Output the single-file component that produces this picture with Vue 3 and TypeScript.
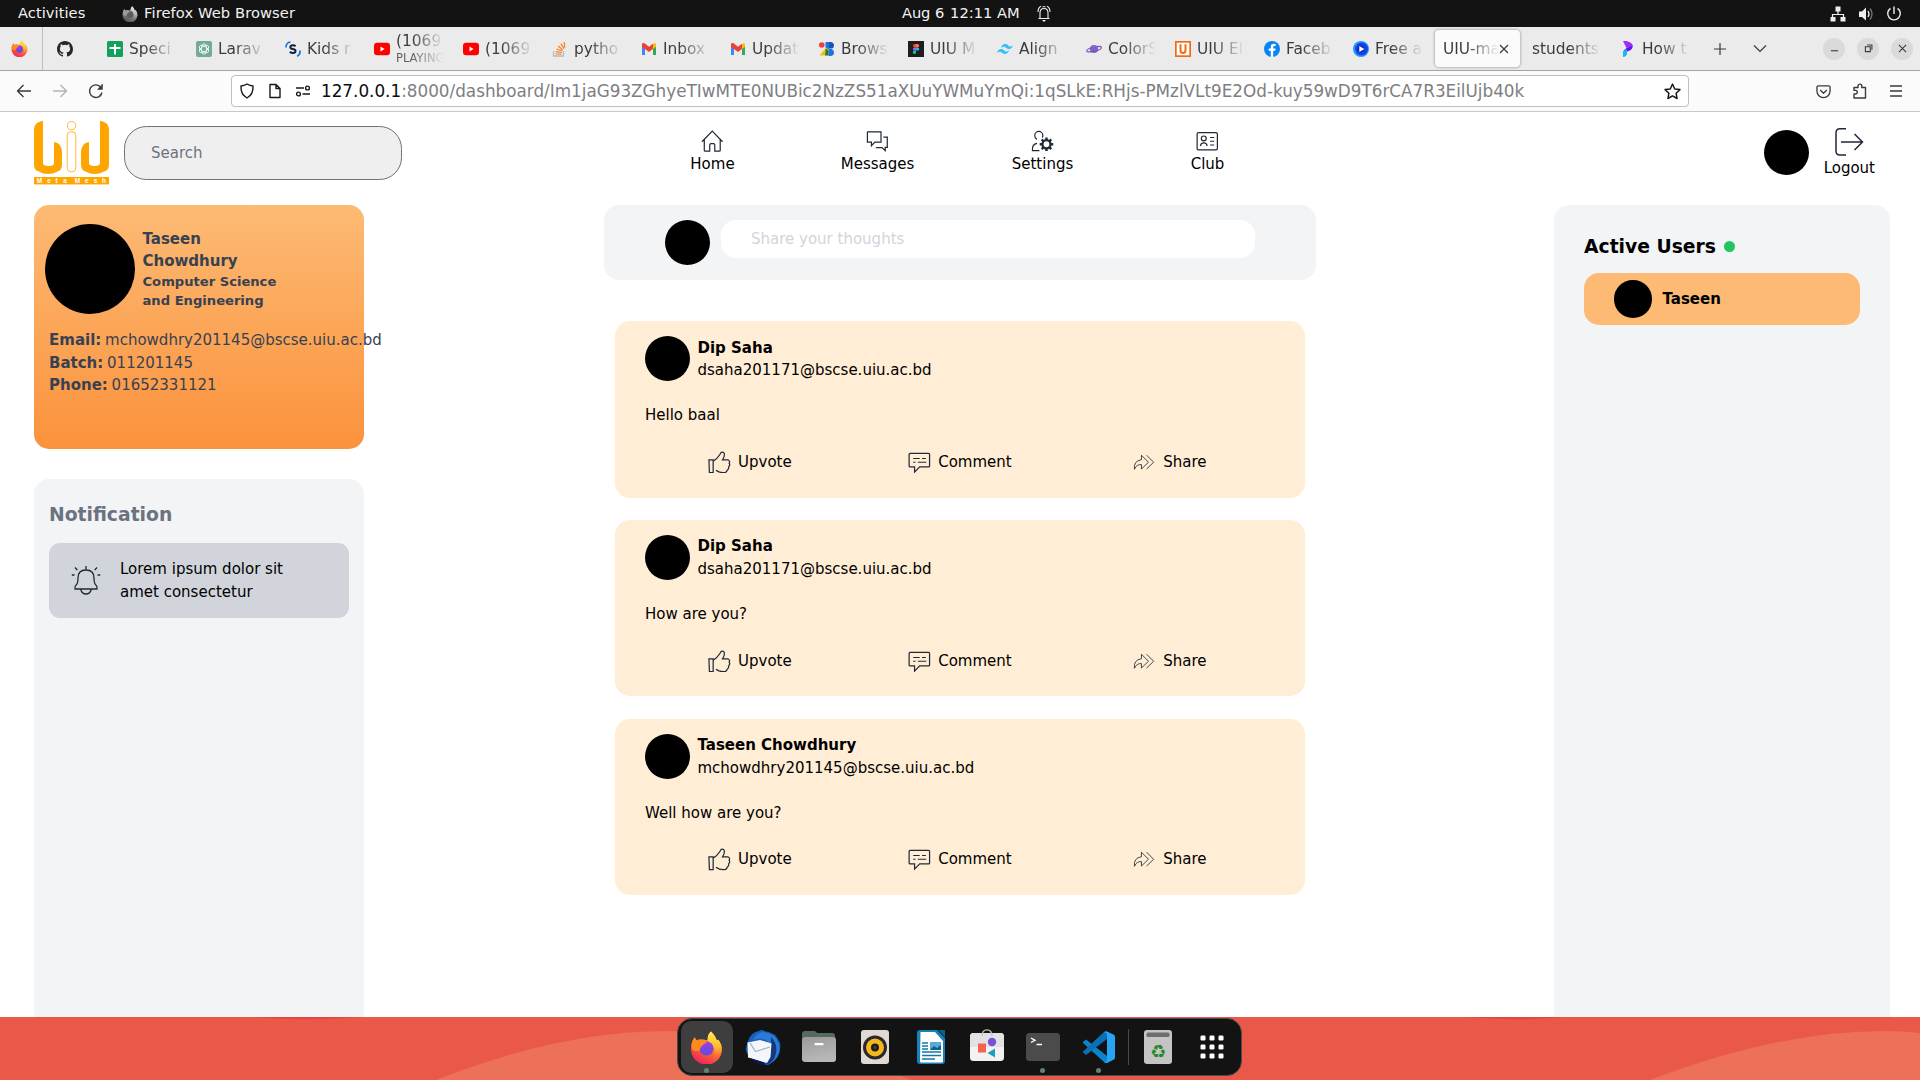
<script setup lang="ts">
interface Tab {
  title: string
  icon?: string
  note?: string
  active?: boolean
}

const tabIcons: Record<string, string> = {
  sheets:
    '<rect width="16" height="16" rx="1.500" fill="#12a05c"/><path d="M7 3h2v3h4.500v2H9v5.500H7V8H2.500V6H7z" fill="#fff"/>',
  openai:
    '<rect width="16" height="16" rx="2" fill="#74aa9c"/><g fill="none" stroke="#fff" stroke-width=".8"><ellipse cx="8" cy="8" rx="2.600" ry="5.200"/><ellipse cx="8" cy="8" rx="2.600" ry="5.200" transform="rotate(60 8 8)"/><ellipse cx="8" cy="8" rx="2.600" ry="5.200" transform="rotate(120 8 8)"/></g>',
  kids:
    '<path d="M1 6.500Q1 1.500 5.500 1" fill="none" stroke="#1b74e4" stroke-width="1.700"/><path d="M15 9.500Q15.500 14 12 15.200" fill="none" stroke="#1b74e4" stroke-width="1.700"/><path d="M10.600 5.300Q9.500 4.300 8 4.300C6.300 4.300 5.300 5.100 5.300 6.200C5.300 8.900 10.500 7.200 10.500 9.900C10.500 11.200 9.300 11.900 7.900 11.900Q6 11.900 4.900 10.700" fill="none" stroke="#14213d" stroke-width="2"/>',
  youtube:
    '<rect y="1.800" width="16" height="12.400" rx="3.200" fill="#f00"/><path d="M6.500 5.600v4.800L10.600 8z" fill="#fff"/>',
  stack:
    '<path d="M1.500 10v5h10v-5" fill="none" stroke="#bcbbbb" stroke-width="1.300"/><path d="M3.500 13h6M3.700 10.700l6 .8M4.500 8l5.600 2M6.200 5l4.600 4M9 2.600l3 5M12.200 1l.6 5.600" stroke="#f48024" stroke-width="1.200"/>',
  gmail:
    '<path d="M1 3v11h3V6z" fill="#4285f4"/><path d="M15 3v11h-3V6z" fill="#34a853"/><path d="M1 2.600Q3 1.200 4.500 3L8 5.800 11.500 3 12.500 3V7.500L8 11 1 5.800z" fill="#ea4335"/><path d="M12 3.200Q14 1.200 15 3v2.700L12 8z" fill="#fbbc04"/>',
  brows:
    '<circle cx="2.800" cy="4" r="2.800" fill="#ea4335"/><path d="M8.500 1H12Q15 1.500 15 4.500 15 7 12.500 7.500H8.500z" fill="#1558b0"/><path d="M9.500 8H13q2 1 2 3.500 0 3-3 3.500H9.500z" fill="#1a73e8"/><path d="M6.500 1H10V8H6.500z" fill="#1a73e8"/><path d="M.5 14.500L7 6.500l2 1.500-3 6.500z" fill="#fbbc04"/><path d="M7 7.500l2.500 2v5H6z" fill="#188038"/>',
  figma:
    '<rect width="16" height="16" fill="#1e1e1e"/><path d="M8 3H6.600a1.700 1.700 0 000 3.400H8z" fill="#f24e1e"/><path d="M8 3h1.400a1.700 1.700 0 010 3.400H8z" fill="#ff7262"/><path d="M8 6.400H6.600a1.700 1.700 0 000 3.400H8z" fill="#a259ff"/><circle cx="9.500" cy="8.100" r="1.700" fill="#1abcfe"/><path d="M8 9.800H6.600A1.600 1.600 0 108 11.400z" fill="#0acf83"/>',
  tailwind:
    '<path d="M4 7q1-4 4.200-4c3 0 3 2.500 4.800 2.500Q14.600 5.500 16 4q-1 4-4.200 4C9 8 8.700 5.800 6.800 5.800Q5.400 5.800 4 7zM0 12q1-4 4.200-4c3 0 3 2.500 4.800 2.500Q10.600 10.500 12 9q-1 4-4.200 4C5 13 4.700 10.800 2.800 10.800Q1.400 10.800 0 12z" fill="#38bdf8"/>',
  planet:
    '<circle cx="8" cy="8" r="4.100" fill="#8661c5"/><ellipse cx="8" cy="8.200" rx="7.600" ry="2" transform="rotate(-14 8 8)" fill="none" stroke="#6e56b8" stroke-width="1.200"/><path d="M4.500 6.500Q8 3 11.500 6z" fill="#8f6cd0"/>',
  uiu:
    '<rect width="16" height="16" fill="#f26a12"/><rect x="1.700" y="1.700" width="12.600" height="12.600" fill="#fff"/><path d="M5.500 3.300V9.300Q5.500 12 8 12T10.500 9.300V3.300" fill="none" stroke="#f26a12" stroke-width="2"/>',
  facebook:
    '<circle cx="8" cy="8" r="8" fill="#0a84f5"/><path d="M9.200 16V9.800h2l.4-2.300H9.200V6.200q0-1.300 1.300-1.300h1.200V3q-4.900-1-4.900 2.700v1.800H4.700v2.300h2.100V16z" fill="#fff"/>',
  play:
    '<circle cx="8" cy="8" r="8" fill="#149bff"/><circle cx="8.600" cy="8" r="6.400" fill="#1b3fe0"/><circle cx="7.600" cy="8" r="3.400" fill="#0f2bb8"/><path d="M6.300 5v6l5-3z" fill="#fff"/>',
  phosphor:
    '<path d="M3 0h3.500Q12.500 1.500 12.800 5L6.500 7z" fill="#a12bff"/><path d="M12.800 4.500Q12.500 9.500 7 10.500H3L6.500 7z" fill="#5a16f0"/><path d="M3 10.500L7 8v5Q6.500 15.500 3 16z" fill="#16b8f5"/>',
}

const tabs: Tab[] = [
  { title: 'Speci', icon: 'sheets' },
  { title: 'Larav', icon: 'openai' },
  { title: 'Kids r', icon: 'kids' },
  { title: '(1069', icon: 'youtube', note: 'PLAYING' },
  { title: '(1069', icon: 'youtube' },
  { title: 'pytho', icon: 'stack' },
  { title: 'Inbox', icon: 'gmail' },
  { title: 'Updat', icon: 'gmail' },
  { title: 'Brows', icon: 'brows' },
  { title: 'UIU M', icon: 'figma' },
  { title: 'Align', icon: 'tailwind' },
  { title: 'ColorS', icon: 'planet' },
  { title: 'UIU El', icon: 'uiu' },
  { title: 'Faceb', icon: 'facebook' },
  { title: 'Free a', icon: 'play' },
  { title: 'UIU-ma', active: true },
  { title: 'students' },
  { title: 'How t', icon: 'phosphor' },
]

const navItems = [
  {
    label: 'Home',
    icon: '<path d="M1 12.500L12 1.200 23 12.500M3.500 10.500V21.500q0 1 1 1h4.800V16q0-1.500 1.500-1.500h2.400q1.500 0 1.500 1.500v6.500h4.800q1 0 1-1V10.500"/>',
  },
  {
    label: 'Messages',
    icon: '<path d="M2 2h14V13H9.500l-3.700 3.700V13H1.500V2.500zM18.500 7.500h4.200V18.500h-2.200V22L17 18.700h-6.500"/>',
  },
  {
    label: 'Settings',
    icon: '<path d="M6.200 10Q4 8.500 4 5.800A4.300 4.300 0 0112.600 5.800Q12.600 7 12 8M9 22H1.500Q1 15 6.500 14.300"/><circle cx="16.500" cy="15.200" r="4.300" stroke-width="2.400"/><path d="M16.500 8v2.700M16.500 19.700v2.700M9.300 15.200H12M21 15.200h2.700M11.400 10.100l1.900 1.900M19.700 18.400l1.900 1.900M11.400 20.300l1.900-1.900M19.700 12l1.900-1.900" stroke-width="2.600"/>',
  },
  {
    label: 'Club',
    icon: '<rect x="1.200" y="2.700" width="21.600" height="18.600" rx="1.500"/><circle cx="8.300" cy="9" r="2.600"/><path d="M4.800 17Q5 13.800 8.300 13.800T11.800 17M15 8H19.500M15 12H19.500M15 16H19.500"/>',
  },
]

const posts = [
  { author: 'Dip Saha', email: 'dsaha201171@bscse.uiu.ac.bd', text: 'Hello baal' },
  { author: 'Dip Saha', email: 'dsaha201171@bscse.uiu.ac.bd', text: 'How are you?' },
  { author: 'Taseen Chowdhury', email: 'mchowdhry201145@bscse.uiu.ac.bd', text: 'Well how are you?' },
]

const firefoxArt =
  '<path d="M4.500 6Q5.500 8 6.500 9.200 9 7.500 13 8.300L17 9Q17 3 20.500 .5 21 4 24 7q1 1.500 2 2l1-.5Q31 12 31 18A15 14.500 0 011 18Q.5 11 4.500 6z" fill="url(#fxBody)"/><path d="M20.500 .5Q25 5 26 9l1.500-.5Q31 13 30.500 19 29 25 23 26 26 18 20 12L17 9Q17 3 20.500 .5z" fill="url(#fxFlame)"/><circle cx="16" cy="17" r="6.800" fill="url(#fxGlobe)"/><path d="M1.500 15Q1.500 10 4.500 6l2 3.200Q9 8 12 9.500q3.500-.2 4 2-3 1.500-4.500 3-2 1.500-2.200 4.500Q2 21 1.500 15z" fill="#ff8a1f"/>'

const dockApps = [
  { name: 'Firefox', running: true, active: true, art: firefoxArt },
  {
    name: 'Thunderbird',
    art: '<path d="M3 12Q6 3 14 2q3-2 5 0 12 1 16 12 2 14-10 21-3 2-6 1.500-5-1.500-8-5.500Q-2 25 1.500 17z" fill="#1a5fb8"/><path d="M18 3Q30 4 34 15 36.500 27 26 34 31 20 22 12 17 8 8 11 11 4 18 3z" fill="#2a7ad8"/><path d="M26 8q9 9 3 22-4 5-9 6 7-8 6-16z" fill="#15387f"/><path d="M2.500 13.500L15 11l11.500 3.500L25.500 28 22 34 13 31.500 3 28.500z" fill="#f4f6fa"/><path d="M5 14l5.500 8.500L25 18" fill="none" stroke="#aab4c4" stroke-width="1.300"/><path d="M4 28.800l9 2.700 6 2 2 3q-10 0-17-7.700z" fill="#14124d"/>',
  },
  {
    name: 'Files',
    art: '<path d="M1 5q0-3 3-3h9q2 0 3 2h15q3 0 3 3v8H1z" fill="#566b5e"/><rect x="1" y="8" width="34" height="25" rx="3" fill="url(#grey)"/><rect x="13.500" y="14" width="9" height="2.300" rx=".8" fill="#fff"/>',
  },
  {
    name: 'Rhythmbox',
    art: '<rect x="4" y="1" width="28" height="34" rx="3" fill="#e0dad2"/><circle cx="18" cy="18.500" r="12" fill="#2a2730"/><circle cx="18" cy="18.500" r="9" fill="#f3b91c"/><circle cx="18" cy="18.500" r="4" fill="#1e1e22"/><circle cx="18" cy="18.500" r="1.500" fill="#4a4430"/>',
  },
  {
    name: 'Writer',
    art: '<path d="M7 1h17l8 8v23q0 3-3 3H7q-3 0-3-3V4q0-3 3-3z" fill="#1682b8"/><path d="M25 1h7v7z" fill="#0f5f8c"/><path d="M7.500 3H22l8 9v20.500q0 1-1 1H8q-1 0-1-1z" fill="#fff"/><path d="M9 14h6M9 17h6M9 20h6M9 23h19M9 26.500h19M9 30h13" stroke="#1577a8" stroke-width="1.300"/><rect x="17" y="13" width="11" height="8" fill="#5aa9d8"/><path d="M17 21l4-4 3 2 4-3v5z" fill="#0f5f8c"/>',
  },
  {
    name: 'Software',
    art: '<rect x="1" y="4" width="34" height="28" rx="3.500" fill="#f3f2f1"/><path d="M1 18V7.500Q1 4 4.500 4h27Q35 4 35 7.500V18z" fill="#e3e1e3"/><path d="M13 7Q13 .8 18 .8T23 7" fill="none" stroke="#c0c0c0" stroke-width="1.300"/><rect x="9" y="14.500" width="8" height="9" fill="#f2644e"/><circle cx="23" cy="13" r="4.200" fill="#7a4fd8"/><path d="M26 19.500v9L18.500 24z" fill="#1f9fc0"/>',
  },
  {
    name: 'Terminal',
    running: true,
    art: '<rect x="1" y="4" width="34" height="28" rx="3.500" fill="#4b4b4b"/><path d="M6 9l4 2.300L6 13.500M11.500 15.500H17" fill="none" stroke="#fff" stroke-width="1.400"/>',
  },
  {
    name: 'Code',
    running: true,
    art: '<path d="M2 13l3-2.500L26 27v7Q24 34 23 33L2 14z" fill="#0b84cf"/><path d="M2 23.500L5 26 26 10V2.500Q24 2 23 3L2 22.500z" fill="#0a6fb4"/><path d="M26 2.500l7 3.300Q34 6.500 34 8v20.500q0 1.300-1 1.900l-7 3.600q-2 .3-3-1 3 .3 3-2.500v-24Q26 3.300 23 3.500 24 2 26 2.500z" fill="#27a4f2"/>',
  },
]
</script>

<template>
  <div class="screen">
    <svg class="defs" width="0" height="0" aria-hidden="true">
      <defs>
        <linearGradient id="fxBody" x1="0.800" y1="0" x2="0.300" y2="1">
          <stop offset="0" stop-color="#ffd83a" />
          <stop offset="0.450" stop-color="#ff7a2a" />
          <stop offset="1" stop-color="#f0215c" />
        </linearGradient>
        <linearGradient id="fxFlame" x1="0" y1="0" x2="0" y2="1">
          <stop offset="0" stop-color="#fff04a" />
          <stop offset="0.600" stop-color="#ffb52e" />
          <stop offset="1" stop-color="#ff5a3a" />
        </linearGradient>
        <linearGradient id="fxGlobe" x1="0" y1="0" x2="0" y2="1">
          <stop offset="0" stop-color="#a03be0" />
          <stop offset="1" stop-color="#5a4fe0" />
        </linearGradient>
        <linearGradient id="grey" x1="0" y1="0" x2="0.300" y2="1">
          <stop offset="0" stop-color="#9a9a9a" />
          <stop offset="1" stop-color="#b8b8b8" />
        </linearGradient>
      </defs>
    </svg>

    <header class="panel">
      <span class="activities">Activities</span>
      <svg class="grey-fox" viewBox="0 0 32 32" v-html="firefoxArt"></svg>
      <span class="app-name">Firefox Web Browser</span>
      <div class="clock">
        <span class="date">Aug 6</span>
        <span>12:11 AM</span>
        <svg width="14" height="18" viewBox="0 0 14 18" fill="none" stroke="#eee" stroke-width="1.100">
          <path d="M1.500 13.500h11M3 13V8Q3 3.500 7 3.500T11 8V13M1 7Q1 2.500 4 1.200M13 7Q13 2.500 10 1.200M5.500 1.700h3" />
          <path d="M5 15h4L7 17z" fill="#eee" stroke="none" />
        </svg>
      </div>
      <div class="tray">
        <svg width="16" height="16" viewBox="0 0 16 16" fill="#eee">
          <path d="M5.500 .5h5v5h-5zM.5 11h5v4.500h-5zM10.500 11h5v4.500h-5z" />
          <path d="M8 5v3.500M2.500 11V8.500h11V11" fill="none" stroke="#eee" stroke-width="1.200" />
        </svg>
        <svg width="16" height="16" viewBox="0 0 16 16" fill="#eee">
          <path d="M1 5.500h3L8 1.500v13L4 11H1z" />
          <path d="M10 5q2 3 0 6" fill="none" stroke="#eee" stroke-width="1.300" />
          <path d="M12 2.500q4 5.500 0 11" fill="none" stroke="#777" stroke-width="1.300" />
        </svg>
        <svg width="16" height="16" viewBox="0 0 16 16" fill="none" stroke="#eee" stroke-width="1.400">
          <path d="M8 .5v7.500M4.500 2.300a6.300 6.300 0 107 0" />
        </svg>
      </div>
    </header>

    <div class="tabbar">
      <div class="pinned first">
        <svg width="17" height="17" viewBox="0 0 32 32" v-html="firefoxArt"></svg>
      </div>
      <div class="pinned">
        <svg width="16" height="16" viewBox="0 0 16 16">
          <path
            fill="#24292e"
            d="M8 0C3.580 0 0 3.580 0 8c0 3.540 2.290 6.530 5.470 7.590.4.070.55-.17.55-.38v-1.490C3.780 14.200 3.310 12.760 3.310 12.760c-.36-.93-.89-1.170-.89-1.170-.73-.5.050-.49.050-.49.800.060 1.230.83 1.230.83.720 1.230 1.880.87 2.340.67.070-.52.280-.87.510-1.070-1.780-.2-3.640-.89-3.640-3.950 0-.87.310-1.590.82-2.150-.08-.2-.36-1.020.08-2.120 0 0 .67-.21 2.200.82a7.600 7.600 0 014 0c1.530-1.040 2.200-.82 2.200-.82.440 1.100.16 1.920.08 2.120.51.560.82 1.270.82 2.150 0 3.070-1.870 3.750-3.650 3.950.29.250.54.730.54 1.480v2.200c0 .21.150.46.550.38A8 8 0 0016 8c0-4.420-3.580-8-8-8z"
          />
        </svg>
      </div>
      <div v-for="(tab, i) in tabs" :key="i" class="tab" :class="{ active: tab.active, plain: !tab.icon }">
        <svg v-if="tab.icon" class="tab-icon" viewBox="0 0 16 16" v-html="tabIcons[tab.icon]"></svg>
        <div class="tab-label">
          <span class="tab-title">{{ tab.title }}</span>
          <span v-if="tab.note" class="tab-note">{{ tab.note }}</span>
        </div>
        <svg v-if="tab.active" class="tab-close" viewBox="0 0 10 10"><path d="M1 1l8 8M9 1L1 9" /></svg>
      </div>
      <svg class="tab-plus" width="14" height="14" viewBox="0 0 14 14"><path d="M7 1v12M1 7h12" /></svg>
      <svg class="tab-more" width="14" height="14" viewBox="0 0 14 14"><path d="M1 3.500l6 6 6-6" /></svg>
      <div class="window-buttons">
        <span class="win"><svg viewBox="0 0 10 10"><path d="M1 7.500h8" /></svg></span>
        <span class="win"><svg viewBox="0 0 10 10"><path d="M1.500 3h5.500v5.500H1.500zM3.500 1.200h5.300v5.300" /></svg></span>
        <span class="win"><svg viewBox="0 0 10 10"><path d="M1 1l8 8M9 1L1 9" /></svg></span>
      </div>
    </div>

    <div class="toolbar">
      <svg class="back" width="16" height="16" viewBox="0 0 16 16"><path d="M15 8H1.500M7.500 2L1.500 8l6 6" /></svg>
      <svg class="forward" width="16" height="16" viewBox="0 0 16 16"><path d="M1 8h13.500M8.500 2l6 6-6 6" /></svg>
      <svg class="reload" width="16" height="16" viewBox="0 0 16 16">
        <path d="M14 9.500A6.300 6.300 0 1112.300 3.700" />
        <path d="M14.500 1v5.500H9.500z" fill="#3a3a3f" stroke-width="0.500" />
      </svg>
      <div class="urlbar">
        <svg width="16" height="16" viewBox="0 0 16 16"><path d="M8 1q3 1.800 6 2Q14.500 11.500 8 15 1.500 11.500 2 3 5 2.800 8 1z" /></svg>
        <svg width="16" height="16" viewBox="0 0 16 16"><path d="M3 1.500h6l4 4v9H3zM9 1.500v4h4" /></svg>
        <svg width="16" height="16" viewBox="0 0 16 16"><path d="M1 5h8M7.500 11H15" /><circle cx="12.500" cy="5" r="1.900" /><circle cx="3.500" cy="11" r="1.900" /></svg>
        <span class="url"><b>127.0.0.1</b>:8000/dashboard/Im1jaG93ZGhyeTIwMTE0NUBic2NzZS51aXUuYWMuYmQi:1qSLkE:RHjs-PMzlVLt9E2Od-kuy59wD9T6rCA7R3EilUjb40k</span>
        <svg class="star" width="17" height="17" viewBox="0 0 16 16"><path d="M8 1l2.100 4.600 4.900.6-3.600 3.400.9 5L8 12.200l-4.300 2.400.9-5L1 6.200l4.900-.6z" /></svg>
      </div>
      <div class="tool-icons">
        <svg width="15" height="15" viewBox="0 0 16 16"><path d="M2.500 2h11Q15 2 15 3.500V7.500a7 7 0 01-14 0v-4Q1 2 2.500 2zM4.500 6.500L8 9.800l3.500-3.300" /></svg>
        <svg width="16" height="16" viewBox="0 0 16 16"><path d="M2 15V11h1.500a1.800 1.800 0 000-3.600H2V4.500h4V3a1.900 1.900 0 013.800 0v1.500H13.500V15z" /></svg>
        <svg width="14" height="14" viewBox="0 0 14 14"><path d="M1 2h12M1 7h12M1 12h12" /></svg>
      </div>
    </div>

    <main class="page">
      <div class="topnav">
        <svg class="logo" viewBox="0 0 75 64">
          <g fill="#ffa500">
            <path d="M9 0C3 .5 0 4 0 9V43Q0 50 5 50.500 9 53 14 53T23.500 50.500Q28 50 28 43V32Q28 22 20 21V42Q20 45 14.500 45T9 42Z" />
            <path d="M66 0C72 .5 75 4 75 9V43Q75 50 70 50.500 66 53 61 53T51.500 50.500Q47 50 47 43V32Q47 22 55 21V42Q55 45 60.500 45T66 42Z" />
            <rect y="56" width="75" height="7" />
            <rect y="63.300" width="75" height=".7" opacity=".6" />
          </g>
          <g fill="none" stroke="#ffb733" stroke-width="1">
            <circle cx="37.500" cy="4.600" r="4.100" />
            <rect x="33.200" y="10.500" width="8.600" height="40.300" rx="4" />
          </g>
          <text class="logo-text" y="62" x="5.500 15 22.700 31 37 43.500 52.800 61.500 70">Meta Mesh</text>
        </svg>
        <div class="search">Search</div>
        <nav class="nav">
          <div v-for="item in navItems" :key="item.label" class="nav-item">
            <svg class="nav-icon" viewBox="0 0 24 24" v-html="item.icon"></svg>
            <span>{{ item.label }}</span>
          </div>
        </nav>
        <div class="account">
          <span class="avatar"></span>
          <div class="logout">
            <svg width="30" height="30" viewBox="0 0 30 30">
              <path d="M12 1.700H6Q2 1.700 2 5.700V24Q2 28 6 28h6M7 15h21M20.500 7L28.500 15l-8 8" />
            </svg>
            <span>Logout</span>
          </div>
        </div>
      </div>

      <div class="columns">
        <aside class="left">
          <section class="profile">
            <div class="profile-head">
              <span class="avatar big"></span>
              <div class="profile-name">
                <div>Taseen<br />Chowdhury</div>
                <div class="dept">Computer Science<br />and Engineering</div>
              </div>
            </div>
            <div class="profile-info">
              <div><b>Email:</b> mchowdhry201145@bscse.uiu.ac.bd</div>
              <div><b>Batch:</b> 011201145</div>
              <div><b>Phone:</b> 01652331121</div>
            </div>
          </section>
          <section class="notifications">
            <h2>Notification</h2>
            <div class="notice">
              <svg class="bell" width="30" height="30" viewBox="0 0 30 30">
                <path d="M15 1v4M4 2.500l2.300 2.500M26 2.500L23.700 5M.8 10h2.700M26.500 10h2.700M4 24Q3.500 21 5.500 19.500 7 18 7 13 7 5 15 5t8 8q0 5 1.500 6.500Q26.500 21 26 24zM9.700 24.500Q11 29 15 29t5.300-4.500" />
              </svg>
              <span>Lorem ipsum dolor sit<br />amet consectetur</span>
            </div>
          </section>
        </aside>

        <section class="feed">
          <div class="composer">
            <span class="avatar"></span>
            <div class="composer-input">Share your thoughts</div>
          </div>
          <article v-for="(post, i) in posts" :key="i" class="post">
            <div class="post-head">
              <span class="avatar"></span>
              <div class="byline">
                <b>{{ post.author }}</b><br />{{ post.email }}
              </div>
            </div>
            <p>{{ post.text }}</p>
            <div class="actions">
              <div class="action">
                <svg viewBox="0 0 24 24"><path d="M1 9.500h4.500V23H1.500zM5.500 11Q10 8 12.500 4L14 1.500Q17.500.5 17.500 4 17.500 6.500 15.500 9.500h6Q24 11 22.500 13 24 15 22 17q.5 2-1.500 3.500-.5 2.500-3 2.500-5 .5-9-2.500" /></svg>
                Upvote
              </div>
              <div class="action comment">
                <svg viewBox="0 0 24 24"><path d="M2.200 2.500H22q1 0 1 1V16q0 1-1 1H12.500L7 22.500V17H2.200q-1 0-1-1V3.500q0-1 1-1zM5.500 8h7M15 8h4M5.500 12H8M10.500 12h9" /></svg>
                Comment
              </div>
              <div class="action thin">
                <svg viewBox="0 0 24 24"><path d="M9 9.300V4.500L16.500 12 9 19.200V14.500Q4 14 1.500 19.500.5 10.500 9 9.300zM14.500 4.500L22 12l-7.500 7.200" /></svg>
                Share
              </div>
            </div>
          </article>
        </section>

        <aside class="right">
          <h2>Active Users <i class="dot"></i></h2>
          <div class="user">
            <span class="avatar small"></span>
            <b>Taseen</b>
          </div>
        </aside>
      </div>
    </main>

    <footer class="desktop">
      <svg class="wallpaper" viewBox="0 0 1920 63">
        <rect width="1920" height="63" fill="#e95849" />
        <g fill="#ed7059">
          <path d="M436 63Q560 14 667 14T912 63z" />
          <path d="M1650 63Q1778 14 1885 14 1905 14 1920 16V63z" />
        </g>
        <g fill="#e84441">
          <path d="M254 0h104Q306 4.500 254 0zM1468 0h96Q1516 4.500 1468 0z" />
        </g>
      </svg>
      <div class="dock">
        <div v-for="app in dockApps" :key="app.name" class="app" :class="{ active: app.active }">
          <svg
            :width="app.active ? 33 : 36"
            :height="app.active ? 33 : 36"
            :viewBox="app.active ? '0 0 32 32' : '0 0 36 36'"
            v-html="app.art"
          ></svg>
          <i v-if="app.running" class="running"></i>
        </div>
        <span class="divider"></span>
        <div class="app trash">
          <svg width="36" height="36" viewBox="0 0 36 36">
            <rect x="4" y="1" width="28" height="34" rx="3" fill="#c4c4c4" />
            <rect x="6.500" y="3.500" width="23" height="4.500" rx="1.500" fill="#6e6e6e" />
            <text class="recycle" x="18" y="29">♻</text>
          </svg>
        </div>
        <div class="app">
          <svg width="24" height="24" viewBox="0 0 24 24" fill="#fff">
            <template v-for="r in 3" :key="r">
              <rect v-for="c in 3" :key="c" :x="c * 9 - 8.5" :y="r * 9 - 8.5" width="5" height="5" rx="1.200" />
            </template>
          </svg>
        </div>
      </div>
    </footer>
  </div>
</template>

<style>
body {
  margin: 0;
  overflow: hidden;
}
</style>

<style scoped>
.screen {
  width: 1920px;
  height: 1080px;
  overflow: hidden;
  display: flex;
  flex-direction: column;
  background: #fff;
  font-family: 'DejaVu Sans', sans-serif;
  font-size: 15px;
  line-height: 22.5px;
  color: #000;
}
.screen * {
  box-sizing: border-box;
}
.screen svg {
  display: block;
  flex: none;
}
.screen .defs {
  position: absolute;
}

/* system panel */
.panel {
  position: relative;
  height: 27px;
  flex: none;
  display: flex;
  align-items: center;
  padding: 0 18px;
  background: #131313;
  color: #f2f2f2;
  font-size: 14.67px;
  line-height: 26px;
  white-space: nowrap;
}
.panel > span,
.clock > span {
  height: 27px;
}
.activities {
  width: 104px;
  letter-spacing: 0.05px;
}
.app-name {
  letter-spacing: 0.1px;
}
.grey-fox {
  width: 16px;
  height: 16px;
  margin-right: 6px;
  filter: grayscale(1);
}
.clock {
  position: absolute;
  left: 902px;
  top: 0;
  height: 27px;
  display: flex;
  align-items: center;
}
.date {
  margin-right: 6px;
  letter-spacing: -0.1px;
}
.clock svg {
  margin-left: 17px;
}
.tray {
  margin-left: auto;
  display: flex;
  gap: 12px;
}

/* tab strip */
.tabbar {
  height: 44px;
  flex: none;
  display: flex;
  align-items: center;
  background: #ebebeb;
  border-bottom: 1px solid #a3a3a6;
  color: #3c3c40;
}
.pinned {
  width: 55px;
  height: 43px;
  display: flex;
  align-items: center;
  padding-left: 14px;
}
.pinned.first {
  width: 43px;
  padding-left: 11px;
  border-right: 1px solid #bdbdbf;
}
.tab {
  width: 85px;
  height: 37px;
  margin: 0 2px;
  flex: none;
  display: flex;
  align-items: center;
  padding-left: 7px;
  border-radius: 4px;
}
.tab.plain {
  padding-left: 8px;
}
.tab.active {
  background: #fbfbfb;
  box-shadow: 0 0 3px rgba(0, 0, 0, 0.45);
}
.tab-icon {
  width: 16px;
  height: 16px;
  margin-right: 6px;
}
.tab-label {
  flex: 1;
  min-width: 0;
  margin-right: 4px;
  padding-top: 1px;
  display: flex;
  flex-direction: column;
  overflow: hidden;
  white-space: nowrap;
  mask-image: linear-gradient(to left, transparent 4px, #000 36px);
}
.tab.active .tab-label {
  margin-right: 0;
  mask-image: linear-gradient(to left, transparent 0, #000 32px);
}
.tab-title {
  font-size: 15.4px;
  line-height: 19px;
}
.tab-note {
  font-size: 11.5px;
  line-height: 15px;
  color: #606064;
}
.tab-close {
  width: 10px;
  height: 10px;
  margin-right: 11px;
}
.tab-close,
.tab-plus,
.tab-more,
.win svg {
  fill: none;
  stroke: #3a3a3f;
  stroke-width: 1.2;
}
.tab-plus {
  margin-left: 13px;
}
.tab-more {
  margin-left: 26px;
}
.window-buttons {
  margin-left: auto;
  padding-right: 7px;
  display: flex;
  gap: 12px;
}
.win {
  width: 22px;
  height: 22px;
  border-radius: 50%;
  background: #dadada;
  display: flex;
  align-items: center;
  justify-content: center;
}
.win svg {
  width: 9px;
  height: 9px;
}

/* address bar */
.toolbar {
  height: 41px;
  flex: none;
  display: flex;
  align-items: center;
  padding-left: 16px;
  background: #fbfbfb;
  border-bottom: 1px solid #c8c8c9;
}
.toolbar svg {
  fill: none;
  stroke: #3a3a3f;
  stroke-width: 1.4;
  stroke-linejoin: round;
}
.toolbar .forward {
  margin-left: 20px;
  stroke: #b4b4b6;
}
.toolbar .reload {
  margin-left: 20px;
}
.urlbar {
  width: 1458px;
  height: 32px;
  margin-left: 127px;
  display: flex;
  align-items: center;
  gap: 12px;
  padding: 0 7px;
  border: 1px solid #bfbfc4;
  border-radius: 4px;
  background: #fff;
}
.toolbar .urlbar svg {
  stroke: #18181c;
}
.url {
  flex: 1;
  margin-left: -2px;
  font-size: 16.81px;
  line-height: 28px;
  color: #7e7e82;
  white-space: nowrap;
}
.url b {
  font-weight: 400;
  color: #0c0c0d;
}
.tool-icons {
  flex: 1;
  display: flex;
  align-items: center;
  justify-content: flex-end;
  gap: 21px;
  padding-right: 17px;
}

/* web page */
.page {
  height: 905px;
  flex: none;
  overflow: hidden;
  background: #fff;
}
.topnav {
  height: 93px;
  display: flex;
  align-items: flex-start;
  padding: 9px 45px 0 34px;
}
.logo {
  width: 75px;
  height: 64px;
}
.logo-text {
  font: bold 6.5px 'Liberation Sans Narrow', 'Liberation Sans', sans-serif;
  fill: #fff;
  text-anchor: middle;
}
.search {
  width: 278px;
  height: 54px;
  margin: 5px 0 0 15px;
  padding: 15px 26px;
  border: 1px solid #6b7280;
  border-radius: 22.5px;
  background: #efefef;
  color: #6b7280;
}
.nav {
  display: flex;
  margin: 9px 0 0 228px;
}
.nav-item {
  width: 165px;
  display: flex;
  flex-direction: column;
  align-items: center;
}
.nav-icon {
  width: 22.5px;
  height: 22.5px;
}
.nav-icon,
.logout svg,
.bell,
.action svg {
  fill: none;
  stroke: #1f2937;
  stroke-width: 1.3;
}
.account {
  margin-left: auto;
  display: flex;
  padding-top: 6px;
}
.account .avatar {
  margin: 3px 15px 0 0;
}
.logout {
  display: flex;
  flex-direction: column;
  align-items: center;
}
.logout svg {
  stroke-width: 1.5;
}
.avatar {
  width: 45px;
  height: 45px;
  flex: none;
  border-radius: 50%;
  background: #000;
}
.avatar.big {
  width: 90px;
  height: 90px;
}
.avatar.small {
  width: 37.5px;
  height: 37.5px;
}
.columns {
  height: 812px;
  display: flex;
  justify-content: space-between;
  padding: 0 30px 0 34px;
}
.left {
  width: 330px;
  display: flex;
  flex-direction: column;
  gap: 30px;
}
.profile {
  height: 244px;
  padding: 19px 15px 0 11px;
  border-radius: 15px;
  background: linear-gradient(#fdba74, #fb923c);
  color: #374151;
}
.profile-head {
  display: flex;
  gap: 7.5px;
}
.profile-name {
  padding-top: 3.75px;
  font-weight: 700;
}
.dept {
  font-size: 13.125px;
  line-height: 18.75px;
}
.profile-info {
  margin: 15px 0 0 4px;
  white-space: nowrap;
}
.profile-info b {
  margin-right: -1px;
}
.notifications {
  flex: 1;
  padding: 22.5px 15px 0;
  border-radius: 15px 15px 0 0;
  background: #f3f4f6;
}
h2 {
  margin: 0;
  font-size: 18.75px;
  line-height: 26.25px;
}
.notifications h2 {
  color: #6b7280;
}
.notice {
  height: 75px;
  margin-top: 15.25px;
  display: flex;
  align-items: center;
  gap: 19px;
  padding-left: 22px;
  border-radius: 11px;
  background: #d1d5db;
}
.bell {
  margin-top: -2px;
}
.feed {
  width: 712px;
  margin-left: 2px;
}
.composer {
  height: 75px;
  display: flex;
  gap: 11px;
  padding: 15px 60px 0 61px;
  border-radius: 15px;
  background: #f3f4f6;
}
.composer-input {
  width: 534px;
  height: 38px;
  padding: 8px 30px;
  border-radius: 15px;
  background: #fff;
  color: #d1d5db;
}
.post {
  height: 176.25px;
  margin: 0 11px 22.5px;
  padding: 15px 30px 0;
  border-radius: 15px;
  background: #ffedd5;
}
.composer + .post {
  margin-top: 41.25px;
}
.post-head {
  display: flex;
  gap: 7.5px;
}
.byline {
  padding-top: 0.3px;
}
.post p {
  margin: 22.5px 0;
}
.actions {
  display: flex;
  justify-content: space-between;
  padding: 1.75px 68.5px 0 63px;
}
.action {
  display: flex;
  align-items: center;
  gap: 7.5px;
}
.action.comment {
  margin: 0 2.5px 0 -2.5px;
}
.action svg {
  width: 22.5px;
  height: 22.5px;
}
.action.thin svg {
  stroke-width: 0.9;
}
.right {
  width: 336px;
  padding: 28.5px 30px 0;
  border-radius: 15px 15px 0 0;
  background: #f3f4f6;
}
.right h2 {
  display: flex;
  align-items: center;
  gap: 8px;
}
.dot {
  width: 11px;
  height: 11px;
  border-radius: 50%;
  background: #22c55e;
}
.user {
  height: 52px;
  margin-top: 13.25px;
  display: flex;
  align-items: center;
  gap: 11px;
  padding-left: 30px;
  border-radius: 15px;
  background: #fdba74;
}

/* desktop strip and dock */
.desktop {
  position: relative;
  height: 63px;
  flex: none;
  display: flex;
  justify-content: center;
}
.wallpaper {
  position: absolute;
  inset: 0;
}
.dock {
  position: relative;
  width: 565px;
  height: 58px;
  margin: 1px 2px 0 0;
  display: flex;
  align-items: center;
  gap: 4px;
  padding-left: 3px;
  border: 1px solid #4a4a4a;
  border-radius: 15px;
  background: #131313;
}
.app {
  position: relative;
  width: 52px;
  height: 52px;
  flex: none;
  display: flex;
  align-items: center;
  justify-content: center;
  border-radius: 10px;
}
.app.active {
  background: #3e3e3e;
}
.app.trash {
  margin-right: -2px;
}
.running {
  position: absolute;
  left: 23.5px;
  bottom: 0;
  width: 5px;
  height: 5px;
  border-radius: 50%;
  background: #678070;
}
.divider {
  width: 1px;
  height: 36px;
  margin: 0 -1px;
  background: #4a4a4a;
}
.recycle {
  font: bold 18px 'DejaVu Sans', sans-serif;
  fill: #26872c;
  text-anchor: middle;
}
</style>
